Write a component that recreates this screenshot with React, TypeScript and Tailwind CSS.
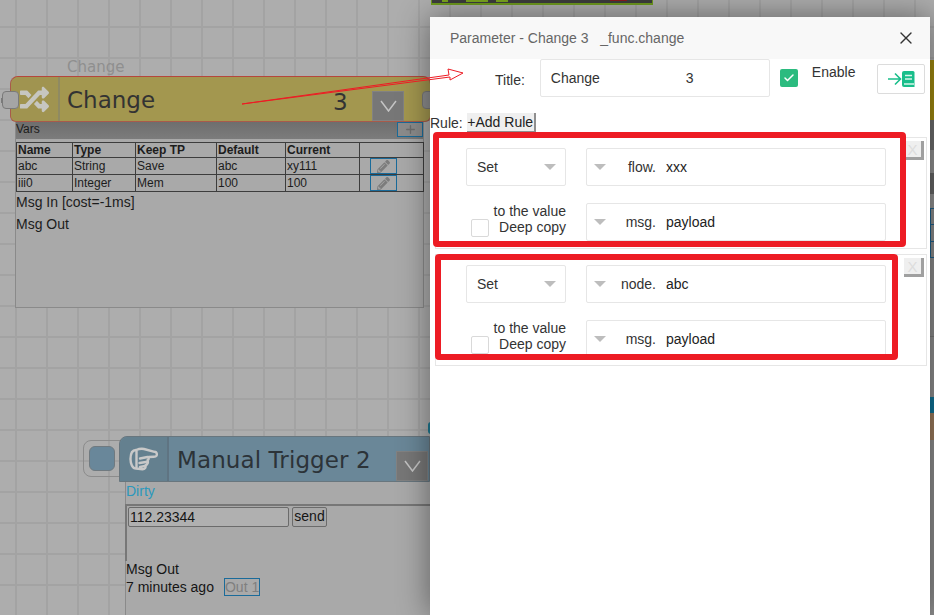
import { Check, Plus, X } from "lucide-react";
import { FaPencilAlt, FaRandom } from "react-icons/fa";

const vars = [
  { name: "abc", type: "String", keep: "Save", def: "abc", current: "xy111" },
  { name: "iii0", type: "Integer", keep: "Mem", def: "100", current: "100" },
];

const rules = [
  { target: "flow.", field: "xxx", source: "msg.", value: "payload" },
  { target: "node.", field: "abc", source: "msg.", value: "payload" },
];

// what peeks out at the right of the drawer, top to bottom
const strip = [
  { h: "h-[60px]", cls: "" },
  { h: "h-[60px]", cls: "bg-[#a08a10]" },
  { h: "h-[30px]", cls: "bg-[#6d6d6d]" },
  { h: "h-[23px]", cls: "bg-[#8f8f8f]" },
  { h: "h-[21px]", cls: "bg-[#666666]" },
  { h: "h-[14px]", cls: "bg-[#909090]" },
  { h: "h-[17px]", cls: "bg-[#8a8a8a] border-l border-y border-[#1d5f8a]" },
  { h: "h-[17px]", cls: "bg-[#8a8a8a] border-l border-b border-[#1d5f8a]" },
  { h: "h-[16px]", cls: "bg-[#8a8a8a] border-l border-b border-[#1d5f8a]" },
  { h: "h-[79px]", cls: "bg-[#8a8a8a] border-b border-[#777777]" },
  { h: "h-[60px]", cls: "bg-[#8e8e8e]" },
  { h: "h-[16px]", cls: "bg-[#0f7296]" },
  { h: "h-[27px]", cls: "bg-[#9b7a5c]" },
  { h: "h-[175px]", cls: "bg-[#8e8e8e]" },
];

function Caret() {
  return <span className="w-0 h-0 border-x-[6px] border-x-transparent border-t-[6px] border-t-[#bdbdbd]" />;
}

function Chevron() {
  return (
    <svg width="17" height="12" viewBox="0 0 17 12" fill="none">
      <path d="M1 1 8.500 11 16 1" stroke="#c4c4c4" strokeWidth="1.500" />
    </svg>
  );
}

function HandIcon() {
  return (
    <svg width="29" height="24" viewBox="0 0 29 24" fill="none" stroke="#c9c9c9" strokeWidth="2.400" strokeLinejoin="round" strokeLinecap="round">
      <path d="M7 3C3 3 1.500 7 1.500 12s2 9.500 5.500 9.500l6.500.8c2.500 0 3.500-2 3-4 2-.8 3-3 2-5 1-.8 1.500-2 1-3.300l5.500-.2c2.500 0 3-1.500 2.800-3-.2-1-1-2-2.300-2L15 2c-3-.8-5.500 0-8 1Z" />
      <path d="M7.500 4v16M11 11.500l7.500-1.500M10.500 16l6.500-1M11 20l5-1" />
    </svg>
  );
}

function ValueSelect({ prefix, value }: { prefix: string; value: string }) {
  return (
    <div className="w-[300px] h-[38px] border border-[#e6e6e6] rounded-[2px] flex items-center pl-[7px]">
      <Caret />
      <span className="w-[50px] text-right text-[#333]">{prefix}</span>
      <span className="ml-[10px] text-[#222]">{value}</span>
    </div>
  );
}

function Rule({ target, field, source, value }: (typeof rules)[number]) {
  return (
    <div className="h-[112px] border border-[#e6e6e6] pl-[30px] pt-[10px] flex items-start">
      <div className="w-[420px] flex flex-col gap-[17px]">
        <div className="flex gap-[20px]">
          <div className="w-[100px] h-[38px] border border-[#e6e6e6] rounded-[2px] flex items-center justify-between pl-[10px] pr-[9px]">
            <span className="text-[#333]">Set</span>
            <Caret />
          </div>
          <ValueSelect prefix={target} value={field} />
        </div>
        <div className="flex gap-[20px]">
          <div className="w-[100px] h-[38px] flex items-end">
            <span className="w-[18px] h-[18px] ml-[5px] mb-[4px] border border-[#d9d9d9] rounded-[2px] shrink-0" />
            <div className="flex-1 text-right leading-[16px] text-[#333] pb-[6px]">
              <div className="whitespace-nowrap -ml-[10px]">to the value</div>
              <div>Deep copy</div>
            </div>
          </div>
          <ValueSelect prefix={source} value={value} />
        </div>
      </div>
      <div className="ml-[18px] -mt-[7px] w-[20px] h-[19px] bg-[#efefef] border-r-[3px] border-b-[3px] border-[#a0a0a0] flex items-center justify-center text-[15px] leading-none text-[#dddddd]">
        X
      </div>
    </div>
  );
}

function VarsTable() {
  const cell = "border border-[#3d3d3d] px-[1px] py-0 text-left align-middle font-normal";
  return (
    <table className="mt-[3px] w-[407px] table-fixed border-collapse text-[12px] leading-[14px] text-[#1c1c1c]">
      <colgroup>
        <col className="w-[56px]" />
        <col className="w-[63px]" />
        <col className="w-[81px]" />
        <col className="w-[69px]" />
        <col className="w-[74px]" />
        <col className="w-[64px]" />
      </colgroup>
      <thead>
        <tr className="h-[15px]">
          <th className={cell + " !font-bold"}>Name</th>
          <th className={cell + " !font-bold"}>Type</th>
          <th className={cell + " !font-bold"}>Keep TP</th>
          <th className={cell + " !font-bold"}>Default</th>
          <th className={cell + " !font-bold"}>Current</th>
          <th className={cell} />
        </tr>
      </thead>
      <tbody>
        {vars.map((v) => (
          <tr key={v.name} className="h-[17px]">
            <td className={cell}>{v.name}</td>
            <td className={cell}>{v.type}</td>
            <td className={cell}>{v.keep}</td>
            <td className={cell}>{v.def}</td>
            <td className={cell}>{v.current}</td>
            <td className={cell + " !p-0"}>
              <div className="ml-[10px] w-[27px] h-[16px] border border-[#1a6b9a] flex items-center justify-center text-[#7c7c7c]">
                <FaPencilAlt size={13} />
              </div>
            </td>
          </tr>
        ))}
      </tbody>
    </table>
  );
}

function ChangeNode() {
  return (
    <div className="absolute left-0 top-[58px] w-[432px]">
      <div className="ml-[67px] h-[18px] text-[15px] leading-[18px] text-[#8f8f8f] font-['DejaVu_Sans',sans-serif]">Change</div>
      <div className="relative ml-[10px] w-[421px] h-[46px] bg-[#a3974f] border border-[#a85a4a] border-t-[#b5473c] rounded-t-[8px] rounded-b-[6px] flex items-stretch">
        <div className="w-[49px] shrink-0 bg-[#a09450] border-r-2 border-[#8f8a62] rounded-l-[8px] flex items-center justify-center text-[#c6c6c0]">
          <FaRandom size={29} />
        </div>
        <span className="ml-[7px] pt-[3px] self-center text-[23px] text-[#333] font-['DejaVu_Sans',sans-serif]">Change</span>
        <span className="absolute left-[322px] top-[8px] text-[23px] text-[#333] font-['DejaVu_Sans',sans-serif]">3</span>
        <div className="absolute left-[361px] bottom-0 w-[32px] h-[30px] bg-[#777777] border border-[#828282] flex items-center justify-center">
          <Chevron />
        </div>
        <span className="absolute -left-[10px] top-[21px] w-[3px] h-[5px] bg-[#7a7a7a]" />
        <span className="absolute -left-[9px] top-[14px] w-[17px] h-[18px] bg-[#a5a5a5] border border-[#7a7a7a] rounded-[4px]" />
        <span className="absolute left-[411px] top-[14px] w-[12px] h-[18px] bg-[#8d8d8d] border border-[#777777] rounded-[4px]" />
      </div>
      <div className="ml-[15px] w-[409px] h-[186px] border-x border-b border-[#8a8a8a] bg-[#a9a9a9] text-[#1c1c1c]">
        <div className="h-[17px] bg-[linear-gradient(#6e6e6e,#7c7c7c)] flex justify-between text-[12px] leading-[14px]">
          <span>Vars</span>
          <div className="w-[26px] h-[15px] border border-[#1a6b9a] bg-[#8c8c8c] flex items-center justify-center text-[#6e6e6e]">
            <Plus size={13} strokeWidth={2.5} />
          </div>
        </div>
        <VarsTable />
        <div className="-mt-[1px] text-[14px] leading-[22px]">Msg In [cost=-1ms]</div>
        <div className="text-[14px] leading-[22px]">Msg Out</div>
      </div>
    </div>
  );
}

function TriggerNode() {
  return (
    <div className="absolute left-[83px] top-[436px] w-[347px] overflow-hidden">
      <div className="flex items-start">
        <div className="mt-[4px] w-[38px] h-[37px] border border-[#8c8c8c] rounded-l-[8px] flex items-center pl-[5px] shrink-0">
          <span className="w-[26px] h-[25px] bg-[#69879a] border border-[#707a80] rounded-[6px]" />
        </div>
        <div className="-ml-[2px] flex-1 relative h-[46px] bg-[#6a8798] border border-[#68767e] rounded-tl-[8px] flex items-stretch">
          <div className="w-[49px] shrink-0 bg-[#64808f] border-r-2 border-[#5f7482] rounded-tl-[8px] flex items-center justify-center">
            <HandIcon />
          </div>
          <span className="ml-[8px] pt-[3px] self-center text-[23px] tracking-[0.1px] text-[#2c3338] font-['DejaVu_Sans',sans-serif] whitespace-nowrap">Manual Trigger 2</span>
          <div className="absolute left-[276px] bottom-0 w-[32px] h-[30px] bg-[#777777] border border-[#828282] flex items-center justify-center">
            <Chevron />
          </div>
        </div>
      </div>
      <div className="ml-[42px] h-[133px] border-l border-[#8a8a8a] bg-[#a9a9a9] text-[#151515]">
        <div className="h-[22px] text-[14px] leading-[18px] text-[#2a98bd]">Dirty</div>
        <div className="h-[57px] border-t-2 border-l-2 border-[#777777] pt-[1px] pl-[1px] flex items-start gap-[3px] -ml-[1px]">
          <div className="w-[161px] h-[20px] bg-[#b0b0b0] border border-[#6b6b6b] rounded-[2px] pl-[1px] text-[14px] leading-[18px]">112.23344</div>
          <div className="w-[35px] h-[20px] bg-[#a8a8a8] border border-[#6b6b6b] rounded-[2px] text-center text-[14px] leading-[17px]">send</div>
        </div>
        <div className="text-[14px] leading-[17px]">Msg Out</div>
        <div className="flex items-center text-[14px] leading-[17px]">
          <span>7 minutes ago</span>
          <span className="ml-[10px] w-[36px] h-[18px] border border-[#1a6b9a] text-center text-[#7f7f7f] whitespace-nowrap">Out 1</span>
        </div>
      </div>
    </div>
  );
}

function Drawer() {
  return (
    <div className="absolute left-[430px] top-[17px] w-[500px] h-[598px] bg-white shadow-[0_0_30px_rgba(0,0,0,0.45)] text-[14px] font-['Liberation_Sans',Arial,sans-serif]">
      <div className="h-[42px] bg-[#f8f8f8] flex items-center justify-between pl-[20px] pr-[14px] text-[#666]">
        <span className="whitespace-pre">Parameter - Change 3   _func.change</span>
        <X size={20} strokeWidth={1.6} className="text-[#333]" />
      </div>
      <div className="h-[38px] flex items-start">
        <span className="ml-[65px] mt-[11px] text-[#333]">Title:</span>
        <div className="ml-[15px] w-[230px] h-[38px] border border-[#e6e6e6] rounded-[2px] flex items-center pl-[10px] text-[#333]">
          <span className="w-[135px]">Change</span>
          <span>3</span>
        </div>
        <div className="ml-[10px] mt-[10px] w-[18px] h-[18px] bg-[#2bbb7f] rounded-[2px] flex items-center justify-center text-white">
          <Check size={12} strokeWidth={3} />
        </div>
        <span className="ml-[14px] mt-[3px] text-[#333]">Enable</span>
        <div className="ml-[22px] mt-[5px] w-[48px] h-[30px] border border-[#dcdcdc] rounded-[2px] flex items-center justify-center">
          <svg width="28" height="16" viewBox="0 0 28 16" fill="none">
            <path d="M1 8h12M8 2.500 13.500 8 8 13.500" stroke="#19be8b" strokeWidth="1.600" />
            <path d="M15 2a2 2 0 0 1 2-2h9a1.500 1.500 0 0 1 1.500 1.500V16H17a2 2 0 0 1-2-2z" fill="#19be8b" />
            <path d="M18 4.500h7M18 8h7M17 13h10" stroke="#d8f5ea" strokeWidth="1.300" />
          </svg>
        </div>
      </div>
      <div className="mt-[16px] h-[20px] flex items-center text-[#333]">
        <span>Rule:</span>
        <span className="ml-[4px] w-[69px] h-[20px] bg-[#efefef] border-r-[2px] border-b-[2px] border-[#8f8f8f] text-center text-[14px] leading-[18px] text-[#222] whitespace-nowrap">+Add Rule</span>
      </div>
      <div className="mt-[4px] ml-[5px] w-[492px] flex flex-col gap-[5px]">
        {rules.map((r) => (
          <Rule key={r.target} {...r} />
        ))}
      </div>
    </div>
  );
}

export default function App() {
  return (
    <div className="relative w-[934px] h-[615px] overflow-hidden bg-[#adadad] bg-[linear-gradient(#a3a3a3_2px,transparent_2px),linear-gradient(90deg,#a3a3a3_2px,transparent_2px)] bg-[size:31px_31px] bg-[position:15px_26px] font-['Liberation_Sans',Arial,sans-serif]">
      {/* node peeking in above the drawer */}
      <div className="absolute left-[431px] top-0 w-[222px] h-[5px] bg-[#3d3d3d] border-b-2 border-x border-[#6e9a1e] flex items-start">
        <span className="ml-[10px] w-[6px] h-[2px] bg-[#7aa51e]" />
        <span className="ml-[18px] w-[22px] h-[2px] bg-[#7aa51e]" />
        <span className="ml-[8px] w-[12px] h-[2px] bg-[#7aa51e]" />
        <span className="ml-[102px] w-[17px] h-[1px] bg-[#8a1a1a]" />
      </div>

      <ChangeNode />
      <TriggerNode />
      <span className="absolute left-[428px] top-[422px] w-[6px] h-[12px] rounded-full bg-[#1f7a92]" />

      <div className="absolute left-[930px] top-0 w-[4px] h-[615px] flex flex-col">
        {strip.map((s, i) => (
          <div key={i} className={s.h + " " + s.cls} />
        ))}
      </div>

      <Drawer />

      {/* red annotations drawn on the screenshot */}
      <div className="absolute left-[433px] top-[132px] w-[473px] h-[115px] border-[6px] border-[#ed1c24] rounded-[4px]" />
      <div className="absolute left-[435px] top-[254px] w-[463px] h-[106px] border-[6px] border-[#ed1c24] rounded-[4px]" />
      <svg className="absolute inset-0 pointer-events-none" width="934" height="615" fill="none">
        <path d="M242 104 449 75 448 69 463 73 450 80 450 77Z" stroke="#ed1c24" strokeWidth="1" />
      </svg>
    </div>
  );
}
